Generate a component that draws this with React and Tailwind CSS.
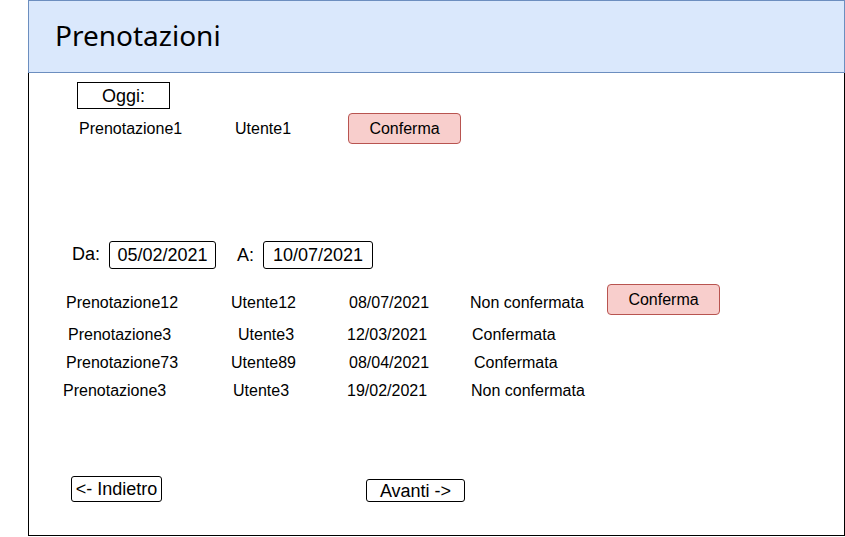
import React from "react";

const rows = [
  {
    pad: "pl-[37px] mt-0",
    cells: [
      { text: "Prenotazione12", cls: "w-[165px]" },
      { text: "Utente12", cls: "w-[118px]" },
      { text: "08/07/2021", cls: "w-[121px]" },
      { text: "Non confermata", cls: "w-[137px]" },
    ],
    button: true,
  },
  {
    pad: "pl-[39px] mt-[11px]",
    cells: [
      { text: "Prenotazione3", cls: "w-[170px]" },
      { text: "Utente3", cls: "w-[109px]" },
      { text: "12/03/2021", cls: "w-[125px]" },
      { text: "Confermata", cls: "w-[137px]" },
    ],
  },
  {
    pad: "pl-[37px] mt-[10px]",
    cells: [
      { text: "Prenotazione73", cls: "w-[165px]" },
      { text: "Utente89", cls: "w-[118px]" },
      { text: "08/04/2021", cls: "w-[125px]" },
      { text: "Confermata", cls: "w-[137px]" },
    ],
  },
  {
    pad: "pl-[34px] mt-[10px]",
    cells: [
      { text: "Prenotazione3", cls: "w-[170px]" },
      { text: "Utente3", cls: "w-[114px]" },
      { text: "19/02/2021", cls: "w-[124px]" },
      { text: "Non confermata", cls: "w-[137px]" },
    ],
  },
];

function ConfermaButton() {
  return (
    <button className="w-[113px] h-[31px] shrink-0 bg-[#f8cecc] border border-[#b85450] rounded-[4px] text-[16px] leading-none text-black">
      Conferma
    </button>
  );
}

export default function App() {
  return (
    <div className="w-[845px] h-[537px] bg-white font-['Liberation_Sans',Arial,sans-serif] text-black">
      <div className="ml-[28px] w-[817px] h-[536px] flex flex-col">
        {/* Header */}
        <div className="h-[73px] shrink-0 bg-[#dae8fc] border border-[#6c8ebf] flex items-center pl-[26px]">
          <h1 className="font-['Noto_Sans',sans-serif] text-[28px] leading-none pb-[4px]">
            Prenotazioni
          </h1>
        </div>

        {/* Body */}
        <div className="flex-1 border-x border-b border-black flex flex-col">
          {/* Oggi */}
          <div className="mt-[9px] ml-[48px] w-[93px] h-[27px] border border-black flex items-center justify-center text-[18px] leading-none">
            Oggi:
          </div>

          <div className="mt-[4px] pl-[50px] flex items-center h-[31px] text-[16px] leading-none">
            <span className="w-[156px] shrink-0">Prenotazione1</span>
            <span className="w-[113px] shrink-0">Utente1</span>
            <ConfermaButton />
          </div>

          {/* Date range */}
          <div className="mt-[97px] pl-[43px] flex items-center h-[28px] text-[18px] leading-none">
            <span className="w-[37px] shrink-0 pb-[2px]">Da:</span>
            <div className="w-[107px] h-[28px] shrink-0 border border-black rounded-[3px] flex items-center justify-center">
              05/02/2021
            </div>
            <span className="ml-[21px] w-[26px] shrink-0">A:</span>
            <div className="w-[110px] h-[28px] shrink-0 border border-black rounded-[3px] flex items-center justify-center">
              10/07/2021
            </div>
          </div>

          {/* Results */}
          <div className="mt-[15px] flex flex-col text-[16px] leading-[18px]">
            {rows.map((row, i) => (
              <div key={i} className={`flex items-start ${row.pad}`}>
                {row.cells.map((c) => (
                  <span
                    key={c.text}
                    className={`${c.cls} shrink-0 ${row.button ? "pt-[10px]" : ""}`}
                  >
                    {c.text}
                  </span>
                ))}
                {row.button && <ConfermaButton />}
              </div>
            ))}
          </div>

          {/* Navigation */}
          <div className="mt-[76px] pl-[42px] flex items-start text-[18px] leading-none">
            <button className="w-[91px] h-[26px] shrink-0 border border-black rounded-[3px] flex items-center justify-center">
              {"<- Indietro"}
            </button>
            <button className="mt-[3px] ml-[204px] w-[99px] h-[23px] shrink-0 border border-black rounded-[3px] flex items-center justify-center">
              {"Avanti ->"}
            </button>
          </div>
        </div>
      </div>
    </div>
  );
}
